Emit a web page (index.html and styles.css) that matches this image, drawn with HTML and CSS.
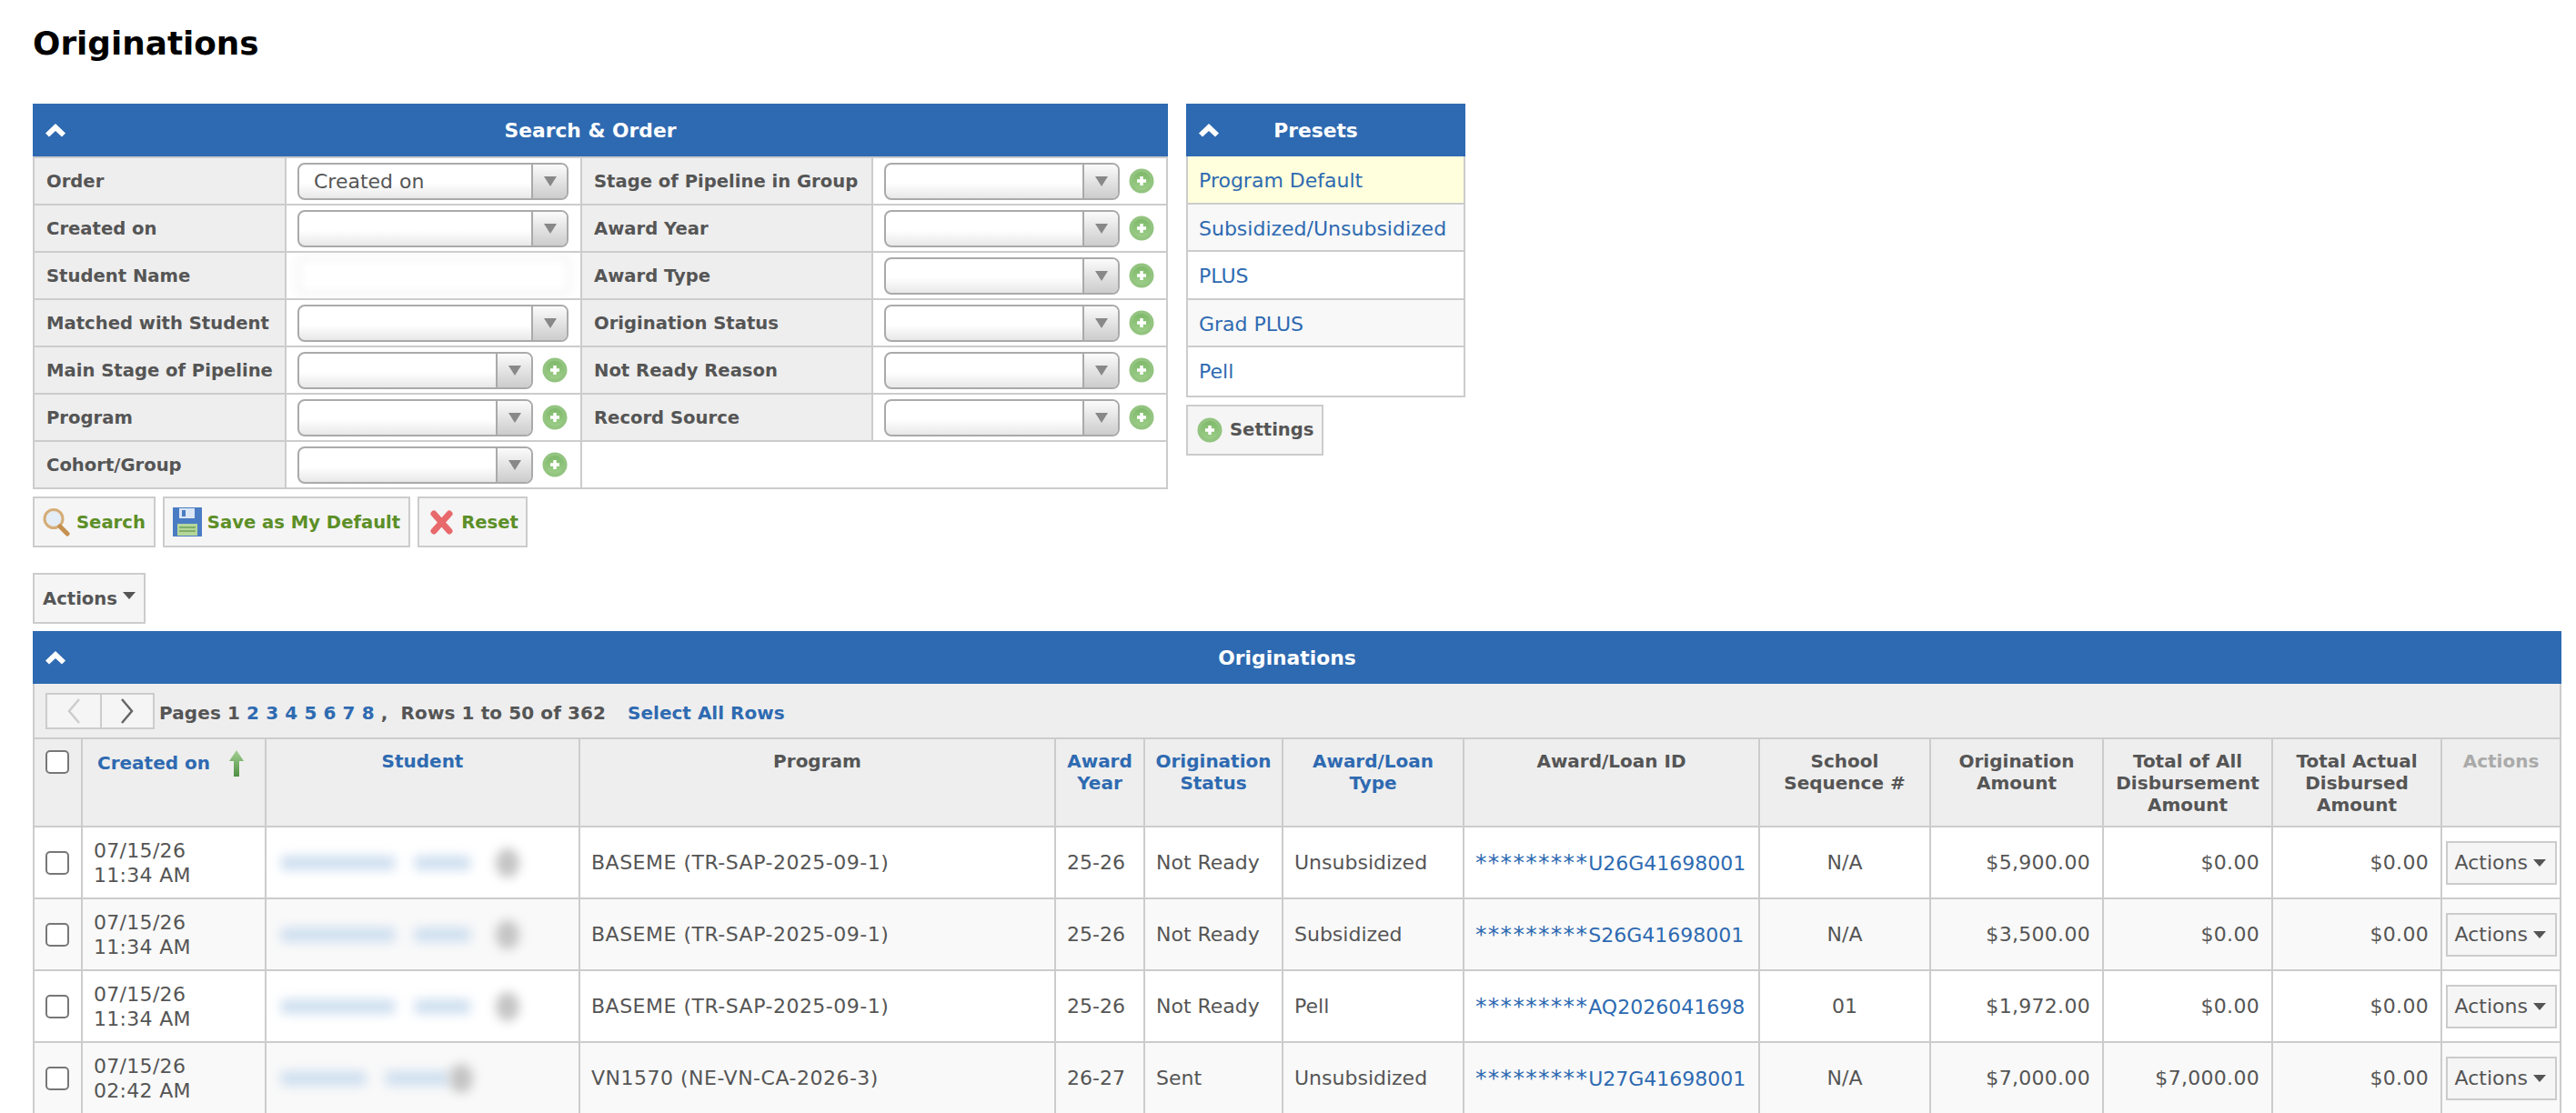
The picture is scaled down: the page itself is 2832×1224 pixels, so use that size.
FILE: index.html
```html
<!DOCTYPE html>
<html lang="en">

<head>
    <meta charset="UTF-8">
    <title>Originations</title>
    <link rel="stylesheet" href="styles.css">
</head>

<body>
    <svg class="sprite" aria-hidden="true">
        <defs>
            <linearGradient id="plusFill" x1="0" y1="0" x2="0" y2="1">
                <stop offset="0" stop-color="#7fb96b" />
                <stop offset="1" stop-color="#9ccd88" />
            </linearGradient>
            <linearGradient id="arrowFill" x1="0" y1="0" x2="0" y2="1">
                <stop offset="0" stop-color="#a5d092" />
                <stop offset="1" stop-color="#4f8f45" />
            </linearGradient>
            <symbol id="plus" viewBox="0 0 28 28">
                <circle cx="14" cy="14" r="13.5" fill="#93c480" />
                <circle cx="14" cy="14" r="10" fill="url(#plusFill)" />
                <path d="M14 9v10M9 14h10" stroke="#fff" stroke-width="3.5" />
            </symbol>
            <symbol id="chevron" viewBox="0 0 22 15">
                <path d="M0 10.5 11 0l11 10.5-4 4-7-6.5-7 6.5z" fill="#fff" />
            </symbol>
        </defs>
    </svg>

    <h1 class="page-title">Originations</h1>

    <div class="top-row">
        <div class="search-col">
            <div class="panel-head">
                <svg class="chevron"><use href="#chevron" /></svg>
                <span class="panel-title">Search &amp; Order</span>
            </div>
            <table class="search-table">
                <colgroup>
                    <col class="sc-1">
                    <col class="sc-2">
                    <col class="sc-3">
                    <col class="sc-4">
                </colgroup>
                <tr>
                    <th>Order</th>
                    <td><div class="field"><div class="combo wide"><span class="combo-text">Created on</span><span class="combo-btn"></span></div></div></td>
                    <th>Stage of Pipeline in Group</th>
                    <td><div class="field"><div class="combo"><span class="combo-text"></span><span class="combo-btn"></span></div><svg class="plus"><use href="#plus" /></svg></div></td>
                </tr>
                <tr>
                    <th>Created on</th>
                    <td><div class="field"><div class="combo wide"><span class="combo-text"></span><span class="combo-btn"></span></div></div></td>
                    <th>Award Year</th>
                    <td><div class="field"><div class="combo"><span class="combo-text"></span><span class="combo-btn"></span></div><svg class="plus"><use href="#plus" /></svg></div></td>
                </tr>
                <tr>
                    <th>Student Name</th>
                    <td><div class="field"><div class="blur-input"></div></div></td>
                    <th>Award Type</th>
                    <td><div class="field"><div class="combo"><span class="combo-text"></span><span class="combo-btn"></span></div><svg class="plus"><use href="#plus" /></svg></div></td>
                </tr>
                <tr>
                    <th>Matched with Student</th>
                    <td><div class="field"><div class="combo wide"><span class="combo-text"></span><span class="combo-btn"></span></div></div></td>
                    <th>Origination Status</th>
                    <td><div class="field"><div class="combo"><span class="combo-text"></span><span class="combo-btn"></span></div><svg class="plus"><use href="#plus" /></svg></div></td>
                </tr>
                <tr>
                    <th>Main Stage of Pipeline</th>
                    <td><div class="field"><div class="combo"><span class="combo-text"></span><span class="combo-btn"></span></div><svg class="plus"><use href="#plus" /></svg></div></td>
                    <th>Not Ready Reason</th>
                    <td><div class="field"><div class="combo"><span class="combo-text"></span><span class="combo-btn"></span></div><svg class="plus"><use href="#plus" /></svg></div></td>
                </tr>
                <tr>
                    <th>Program</th>
                    <td><div class="field"><div class="combo"><span class="combo-text"></span><span class="combo-btn"></span></div><svg class="plus"><use href="#plus" /></svg></div></td>
                    <th>Record Source</th>
                    <td><div class="field"><div class="combo"><span class="combo-text"></span><span class="combo-btn"></span></div><svg class="plus"><use href="#plus" /></svg></div></td>
                </tr>
                <tr>
                    <th>Cohort/Group</th>
                    <td><div class="field"><div class="combo"><span class="combo-text"></span><span class="combo-btn"></span></div><svg class="plus"><use href="#plus" /></svg></div></td>
                    <td colspan="2"></td>
                </tr>
            </table>
            <div class="search-actions">
                <button class="btn btn-go">
                    <svg class="icon-search" viewBox="0 0 30 31">
                        <circle cx="12" cy="11.5" r="10" fill="#e4ecf5" stroke="#d6ad78" stroke-width="3" />
                        <path d="M19 20 27 28" stroke="#c58f4f" stroke-width="5" stroke-linecap="round" />
                    </svg>
                    Search
                </button>
                <button class="btn btn-go btn-save">
                    <svg class="icon-save" viewBox="0 0 32 32">
                        <path d="M0 0h32v32H0z" fill="#4a7cc4" />
                        <path d="M7 1h17v11H7z" fill="#dbe6f5" />
                        <path d="M10 3h4v7h-4z" fill="#4a7cc4" />
                        <path d="M5 18h22v13H5z" fill="#b6d79a" />
                        <path d="M7 22h18M7 26h18" stroke="#7fae6a" stroke-width="2" />
                    </svg>
                    Save as My Default
                </button>
                <button class="btn btn-go btn-reset">
                    <svg class="icon-reset" viewBox="0 0 27 27">
                        <path d="M5 4 22 23M22 4 5 23" stroke="#e8696b" stroke-width="7" stroke-linecap="round" />
                    </svg>
                    Reset
                </button>
            </div>
        </div>

        <div class="presets-col">
            <div class="panel-head">
                <svg class="chevron"><use href="#chevron" /></svg>
                <span class="panel-title">Presets</span>
            </div>
            <div class="preset-list">
                <a class="preset current">Program Default</a>
                <a class="preset alt">Subsidized/Unsubsidized</a>
                <a class="preset">PLUS</a>
                <a class="preset alt">Grad PLUS</a>
                <a class="preset">Pell</a>
            </div>
            <button class="btn settings-btn"><svg class="plus"><use href="#plus" /></svg>Settings</button>
        </div>
    </div>

    <button class="btn actions-top">Actions<span class="caret"></span></button>

    <div class="panel-head">
        <svg class="chevron"><use href="#chevron" /></svg>
        <span class="panel-title">Originations</span>
    </div>
    <div class="toolbar">
        <div class="pager">
            <span class="pager-btn">
                <svg width="18" height="30" viewBox="0 0 18 30"><path d="M15 2 4 15l11 13" fill="none" stroke="#ccc" stroke-width="2.5" /></svg>
            </span>
            <span class="pager-btn">
                <svg width="18" height="30" viewBox="0 0 18 30"><path d="M3 2l11 13L3 28" fill="none" stroke="#666" stroke-width="2.5" /></svg>
            </span>
        </div>
        <span class="pages">Pages 1 <a>2</a> <a>3</a> <a>4</a> <a>5</a> <a>6</a> <a>7</a> <a>8</a> , &nbsp;Rows 1 to 50 of 362</span>
        <a class="select-all">Select All Rows</a>
    </div>

    <table class="grid">
        <colgroup>
            <col class="gc-check">
            <col class="gc-created">
            <col class="gc-student">
            <col class="gc-program">
            <col class="gc-year">
            <col class="gc-status">
            <col class="gc-type">
            <col class="gc-id">
            <col class="gc-seq">
            <col class="gc-amount">
            <col class="gc-total">
            <col class="gc-actual">
            <col class="gc-actions">
        </colgroup>
        <thead>
            <tr>
                <th><input type="checkbox" class="check"></th>
                <th class="created-head"><a>Created on</a>
                    <svg class="sort-arrow" viewBox="0 0 16 30">
                        <path d="M8 0 16 12H11V29H5V12H0z" fill="url(#arrowFill)" />
                    </svg>
                </th>
                <th><a>Student</a></th>
                <th>Program</th>
                <th><a>Award Year</a></th>
                <th><a>Origination Status</a></th>
                <th><a>Award/Loan Type</a></th>
                <th>Award/Loan ID</th>
                <th>School Sequence #</th>
                <th>Origination Amount</th>
                <th>Total of All Disbursement Amount</th>
                <th>Total Actual Disbursed Amount</th>
                <th class="muted">Actions</th>
            </tr>
        </thead>
        <tbody>
            <tr>
                <td><input type="checkbox" class="check"></td>
                <td class="date">07/15/26<br>11:34 AM</td>
                <td><div class="smudge"><span class="bar b-125"></span><span class="bar b-61"></span><span class="dot"></span></div></td>
                <td class="prog">BASEME (TR-SAP-2025-09-1)</td>
                <td>25-26</td>
                <td>Not Ready</td>
                <td>Unsubsidized</td>
                <td class="loan-id"><a><span class="stars">*********</span>U26G41698001</a></td>
                <td class="center">N/A</td>
                <td class="money">$5,900.00</td>
                <td class="money">$0.00</td>
                <td class="money">$0.00</td>
                <td class="center"><button class="btn row-actions">Actions<span class="caret"></span></button></td>
            </tr>
            <tr>
                <td><input type="checkbox" class="check"></td>
                <td class="date">07/15/26<br>11:34 AM</td>
                <td><div class="smudge"><span class="bar b-125"></span><span class="bar b-61"></span><span class="dot"></span></div></td>
                <td class="prog">BASEME (TR-SAP-2025-09-1)</td>
                <td>25-26</td>
                <td>Not Ready</td>
                <td>Subsidized</td>
                <td class="loan-id"><a><span class="stars">*********</span>S26G41698001</a></td>
                <td class="center">N/A</td>
                <td class="money">$3,500.00</td>
                <td class="money">$0.00</td>
                <td class="money">$0.00</td>
                <td class="center"><button class="btn row-actions">Actions<span class="caret"></span></button></td>
            </tr>
            <tr>
                <td><input type="checkbox" class="check"></td>
                <td class="date">07/15/26<br>11:34 AM</td>
                <td><div class="smudge"><span class="bar b-125"></span><span class="bar b-61"></span><span class="dot"></span></div></td>
                <td class="prog">BASEME (TR-SAP-2025-09-1)</td>
                <td>25-26</td>
                <td>Not Ready</td>
                <td>Pell</td>
                <td class="loan-id"><a><span class="stars">*********</span>AQ2026041698</a></td>
                <td class="center">01</td>
                <td class="money">$1,972.00</td>
                <td class="money">$0.00</td>
                <td class="money">$0.00</td>
                <td class="center"><button class="btn row-actions">Actions<span class="caret"></span></button></td>
            </tr>
            <tr>
                <td><input type="checkbox" class="check"></td>
                <td class="date">07/15/26<br>02:42 AM</td>
                <td><div class="smudge"><span class="bar b-93"></span><span class="bar b-70"></span><span class="dot dot-tight"></span></div></td>
                <td class="prog">VN1570 (NE-VN-CA-2026-3)</td>
                <td>26-27</td>
                <td>Sent</td>
                <td>Unsubsidized</td>
                <td class="loan-id"><a><span class="stars">*********</span>U27G41698001</a></td>
                <td class="center">N/A</td>
                <td class="money">$7,000.00</td>
                <td class="money">$7,000.00</td>
                <td class="money">$0.00</td>
                <td class="center"><button class="btn row-actions">Actions<span class="caret"></span></button></td>
            </tr>
        </tbody>
    </table>
</body>

</html>
```

FILE: styles.css
```css
:root {
    --blue: #2e6ab1;
    --line: #ccc;
    --head: #eee;
    --text: #555;
}

* {
    box-sizing: border-box;
}

html,
body {
    margin: 0;
    padding: 0;
}

body {
    padding: 0 16px 0 36px;
    height: 1224px;
    overflow: hidden;
    background: #fff;
    color: var(--text);
    font: 22px/27px "DejaVu Sans", Verdana, sans-serif;
}

a {
    color: var(--blue);
    text-decoration: none;
}

.sprite {
    position: absolute;
    width: 0;
    height: 0;
}

.page-title {
    margin: 0;
    padding: 26px 0 44px;
    height: 114px;
    color: #000;
    font-size: 35.8px;
    line-height: 44px;
    font-weight: bold;
}

.top-row {
    display: flex;
    gap: 20px;
    align-items: flex-start;
}

.search-col {
    width: 1248px;
}

.presets-col {
    width: 307px;
}

/* blue bar on top of every panel */
.panel-head {
    display: flex;
    align-items: center;
    height: 58px;
    padding-left: 14px;
    background: var(--blue);
    color: #fff;
    font-size: 21.8px;
    font-weight: bold;
}

.chevron {
    flex: none;
    width: 22px;
    height: 15px;
}

.panel-title {
    flex: 1;
    padding-right: 58px;
    text-align: center;
}

/* search form */
.search-table {
    width: 100%;
    table-layout: fixed;
    border-collapse: collapse;
    border: 2px solid var(--line);
    border-top: 0;
}

.sc-1 {
    width: 277px;
}

.sc-2 {
    width: 325px;
}

.sc-3 {
    width: 320px;
}

.search-table tr {
    height: 52px;
}

.search-table th,
.search-table td {
    padding: 0;
    border: 2px solid var(--line);
}

.search-table th {
    padding-left: 13px;
    background: var(--head);
    text-align: left;
    font-size: 19.6px;
    white-space: nowrap;
}

.field {
    display: flex;
    align-items: center;
    gap: 10px;
    padding-left: 12px;
}

.combo {
    display: flex;
    width: 259px;
    height: 41px;
    border: 2px solid #aaa;
    border-radius: 8px;
    background: linear-gradient(#fff 55%, #e8e8e8);
    overflow: hidden;
}

.combo.wide {
    width: 298px;
}

.combo-text {
    flex: 1;
    padding-left: 16px;
    line-height: 37px;
}

.combo-btn {
    display: flex;
    flex: none;
    align-items: center;
    justify-content: center;
    width: 39px;
    border-left: 2px solid #aaa;
    background: linear-gradient(#fbfbfb, #ccc);
}

.combo-btn::after {
    content: "";
    border-top: 11px solid #888;
    border-left: 7.5px solid transparent;
    border-right: 7.5px solid transparent;
}

.plus {
    flex: none;
    width: 28px;
    height: 28px;
}

.blur-input {
    width: 300px;
    height: 42px;
    border: 2px solid #e4e4e4;
    border-radius: 6px;
    filter: blur(5px);
}

/* buttons */
.btn {
    display: inline-flex;
    align-items: center;
    height: 56px;
    padding: 0 9px;
    border: 2px solid var(--line);
    background: #f5f5f5;
    color: var(--text);
    font: bold 19.6px/27px "DejaVu Sans", Verdana, sans-serif;
}

.search-actions {
    display: flex;
    gap: 8px;
    margin-top: 8px;
}

.btn-go {
    gap: 7px;
    color: #5c8f27;
}

.btn-save {
    gap: 6px;
}

.btn-reset {
    gap: 8px;
    padding: 0 8px 0 11px;
}

.icon-search {
    width: 30px;
    height: 31px;
}

.icon-save {
    width: 32px;
    height: 32px;
}

.icon-reset {
    width: 27px;
    height: 27px;
}

.settings-btn {
    gap: 8px;
    margin-top: 8px;
    padding: 0 8px 0 10px;
}

.actions-top {
    margin: 28px 0 8px;
    padding: 0 9px;
}

.caret {
    display: inline-block;
    margin-left: 6px;
    vertical-align: middle;
    border-top: 8px solid currentColor;
    border-left: 7px solid transparent;
    border-right: 7px solid transparent;
}

.actions-top .caret {
    margin-bottom: 6px;
}

/* presets */
.preset-list {
    border: 2px solid var(--line);
    border-top: 0;
}

.preset {
    display: block;
    height: 52.5px;
    padding: 13px 12px 0;
    border-bottom: 2px solid var(--line);
    line-height: 27px;
}

.preset:last-child {
    border-bottom: 0;
}

.preset.current {
    background: #ffd;
}

.preset.alt {
    background: #f8f8f8;
}

/* pager row */
.toolbar {
    display: flex;
    align-items: center;
    height: 59px;
    padding-left: 12px;
    border: 2px solid var(--line);
    border-top: 0;
    border-bottom: 0;
    background: var(--head);
    font-weight: bold;
    font-size: 20px;
}

.pager {
    display: flex;
    flex: none;
    margin-right: 5px;
    border: 2px solid var(--line);
    background: #f5f5f5;
}

.pager-btn {
    display: flex;
    align-items: center;
    justify-content: center;
    width: 58px;
    height: 36px;
}

.pager-btn + .pager-btn {
    border-left: 2px solid var(--line);
}

.pages,
.select-all {
    padding-top: 5px;
}

.pages {
    letter-spacing: 0.1px;
}

.select-all {
    margin-left: 24px;
}

/* results table */
.grid {
    width: 2780px;
    table-layout: fixed;
    border-collapse: collapse;
}

.gc-check {
    width: 53px;
}

.gc-created {
    width: 202px;
}

.gc-student {
    width: 345px;
}

.gc-program {
    width: 523px;
}

.gc-year {
    width: 98px;
}

.gc-status {
    width: 152px;
}

.gc-type {
    width: 199px;
}

.gc-id {
    width: 325px;
}

.gc-seq {
    width: 188px;
}

.gc-amount {
    width: 190px;
}

.gc-total {
    width: 186px;
}

.gc-actual {
    width: 186px;
}

.grid th,
.grid td {
    border: 2px solid var(--line);
}

.grid th {
    height: 97px;
    padding: 12px 6px 0;
    vertical-align: top;
    background: var(--head);
    font-size: 20px;
    line-height: 24px;
    text-align: center;
}

.grid td {
    height: 79px;
    padding: 0 12px;
}

.grid tbody tr:nth-child(even) td {
    background: #f9f9f9;
}

.grid .muted {
    color: #aaa;
}

.grid .center {
    padding: 0;
    text-align: center;
}

.grid .money {
    padding-right: 13px;
    text-align: right;
    letter-spacing: 0.3px;
}

.grid .date {
    letter-spacing: 0.3px;
}

.grid .prog {
    letter-spacing: 0.5px;
}

.grid .loan-id {
    white-space: nowrap;
}

.stars {
    font-size: 25px;
    letter-spacing: 1.3px;
}

.grid th:first-child,
.grid td:first-child {
    padding-left: 12px;
    padding-right: 0;
    text-align: left;
}

.check {
    display: block;
    margin: 0;
    width: 26px;
    height: 26px;
    border: 2px solid #777;
    border-radius: 5px;
    background: #fff;
    appearance: none;
}

.created-head {
    white-space: nowrap;
}

.grid th.created-head {
    padding-top: 14px;
    padding-left: 16px;
    text-align: left;
}

.sort-arrow {
    width: 16px;
    height: 30px;
    margin-left: 14px;
    vertical-align: top;
    margin-top: -2px;
}

/* blurred names */
.smudge {
    display: flex;
    align-items: center;
    gap: 22px;
    padding-left: 4px;
}

.bar {
    height: 16px;
    background: #cfdff0;
    filter: blur(6px);
}

.b-125 {
    width: 125px;
}

.b-61 {
    width: 61px;
}

.b-93 {
    width: 93px;
}

.b-70 {
    width: 70px;
}

.dot {
    width: 26px;
    height: 32px;
    margin-left: 6px;
    border-radius: 50%;
    background: #c4c4c4;
    filter: blur(6px);
}

.dot-tight {
    margin-left: -22px;
}

.row-actions {
    height: 48px;
    width: 122px;
    padding: 0 0 0 8px;
    font: 22px/27px "DejaVu Sans", Verdana, sans-serif;
}
```
